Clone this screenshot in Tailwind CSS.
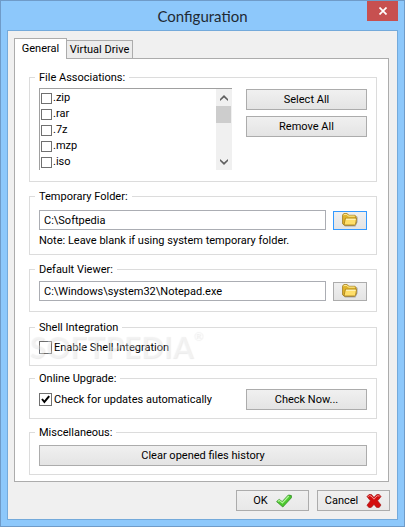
<!DOCTYPE html>
<html lang="en">
  <head>
    <meta charset="UTF-8" />
    <meta name="viewport" content="width=device-width, initial-scale=1.0" />
    <script src="https://cdn.jsdelivr.net/npm/@tailwindcss/browser@4"></script>
    <title>Configuration</title>
  </head>
  <body
    class="flex min-h-screen flex-col border border-[#6f9bc8] bg-[#8dc8fb] px-1.5 pb-1.5 font-['Roboto','DejaVu_Sans',sans-serif] text-[11px] leading-4 text-black"
  >
    <!-- title bar -->
    <header class="relative flex h-[29px] shrink-0 items-center justify-center">
      <h1 class="font-['Lato',sans-serif] text-[15px] text-[#1f2a33]">
        Configuration
      </h1>
      <button
        class="absolute top-0 right-0 grid h-5 w-[31px] place-items-center bg-[#c75050]"
        aria-label="Close"
      >
        <svg class="h-2 w-2" viewBox="0 0 8 8" stroke="#fff" stroke-width="1.7">
          <path d="M0.5 0.5 7.5 7.5M7.5 0.5 0.5 7.5" />
        </svg>
      </button>
    </header>

    <main
      class="flex grow flex-col border border-[#74aadb] bg-[#f0f0f0] px-1.5 pt-[7px] pb-2"
    >
      <!-- tabs -->
      <div class="flex items-end" role="tablist">
        <button
          class="relative -mb-px h-[21px] w-[53px] border border-b-0 border-[#acacac] bg-white pb-px"
          role="tab"
          aria-selected="true"
        >
          General
        </button>
        <button
          class="-ml-px h-[18px] w-[67px] border border-b-0 border-[#acacac] bg-[#ececec] whitespace-nowrap"
          role="tab"
          aria-selected="false"
        >
          Virtual Drive
        </button>
      </div>

      <form
        class="mr-0.5 flex grow flex-col border border-[#acacac] bg-white pt-3 pr-[11px] pb-1.5 pl-3.5"
      >
        <fieldset class="border border-[#dcdcdc] px-[9px] pt-1 pb-[11px]">
          <legend class="-ml-1 px-1 leading-[13px]">File Associations:</legend>
          <div class="flex items-start gap-3.5">
            <div
              class="flex h-[82px] grow border-t border-l border-[#a0a0a0] bg-white"
            >
              <ul class="grow overflow-hidden pt-px pl-px">
                <li class="flex h-4 items-center gap-px">
                  <input
                    id="zip"
                    type="checkbox"
                    class="h-[11px] w-[11px] appearance-none border border-[#707070] bg-white checked:bg-[#707070]"
                  />
                  <label for="zip">.zip</label>
                </li>
                <li class="flex h-4 items-center gap-px">
                  <input
                    id="rar"
                    type="checkbox"
                    class="h-[11px] w-[11px] appearance-none border border-[#707070] bg-white checked:bg-[#707070]"
                  />
                  <label for="rar">.rar</label>
                </li>
                <li class="flex h-4 items-center gap-px">
                  <input
                    id="7z"
                    type="checkbox"
                    class="h-[11px] w-[11px] appearance-none border border-[#707070] bg-white checked:bg-[#707070]"
                  />
                  <label for="7z">.7z</label>
                </li>
                <li class="flex h-4 items-center gap-px">
                  <input
                    id="mzp"
                    type="checkbox"
                    class="h-[11px] w-[11px] appearance-none border border-[#707070] bg-white checked:bg-[#707070]"
                  />
                  <label for="mzp">.mzp</label>
                </li>
                <li class="flex h-4 items-center gap-px">
                  <input
                    id="iso"
                    type="checkbox"
                    class="h-[11px] w-[11px] appearance-none border border-[#707070] bg-white checked:bg-[#707070]"
                  />
                  <label for="iso">.iso</label>
                </li>
              </ul>
              <!-- scrollbar -->
              <div class="flex w-4 flex-col bg-[#f0f0f0]">
                <button
                  type="button"
                  class="grid h-[17px] place-items-center"
                  aria-label="Scroll up"
                >
                  <svg class="h-1.5 w-2" viewBox="0 0 8 6" fill="#606060">
                    <path d="M4 0 8 4V6L4 2.6 0 6V4Z" />
                  </svg>
                </button>
                <div class="mr-px h-[17px] bg-[#cdcdcd]"></div>
                <button
                  type="button"
                  class="mt-auto grid h-[17px] place-items-center"
                  aria-label="Scroll down"
                >
                  <svg class="h-1.5 w-2" viewBox="0 0 8 6" fill="#606060">
                    <path d="M4 6 8 2V0L4 3.4 0 0V2Z" />
                  </svg>
                </button>
              </div>
            </div>
            <div class="flex w-[121px] flex-col gap-1.5 pt-px">
              <button
                type="button"
                class="h-[21px] border border-[#acacac] bg-linear-to-b from-[#f0f0f0] to-[#e4e4e4]"
              >
                Select All
              </button>
              <button
                type="button"
                class="h-[21px] border border-[#acacac] bg-linear-to-b from-[#f0f0f0] to-[#e4e4e4]"
              >
                Remove All
              </button>
            </div>
          </div>
        </fieldset>

        <fieldset class="mt-2 border border-[#dcdcdc] px-[9px] pt-[7px] pb-[5px]">
          <legend class="-ml-1 px-1 leading-[13px]">
            <label for="temp">Temporary Folder:</label>
          </legend>
          <div class="flex items-center gap-[7px]">
            <input
              id="temp"
              type="text"
              value="C:\Softpedia"
              class="h-5 min-w-0 grow border border-[#abadb3] bg-white px-1"
            />
            <button
              type="button"
              class="grid h-[19px] w-[34px] place-items-center border border-[#3399ff] bg-linear-to-b from-[#f0f0f0] to-[#e4e4e4]"
              aria-label="Browse temporary folder"
            >
              <svg class="h-3.5 w-4" viewBox="0 0 16 14">
                <path d="M2 12.5 3 13.6H13.5L15.6 9V4L14.5 3V9Z" fill="#777" opacity=".55" />
                <path d="M.6 10.8V2L1.8.6H5.2L6.8 2.3H13L14 3.3V10L12.5 12H2Z" fill="#e0b52e" stroke="#9a7414" stroke-width=".8" />
                <path d="M1.4 2.3 2.2 1.4H4.8L6.4 3.1H12.8" fill="none" stroke="#fff0a0" />
                <path d="M2 12 3.4 5.2H14.6L13.6 11.2 12.6 12Z" fill="#ffdf6a" stroke="#a57c18" stroke-width=".8" />
                <path d="M4 6.2H13.6" stroke="#fffad0" />
              </svg>
            </button>
          </div>
          <p class="mt-[3px]">
            Note: Leave blank if using system temporary folder.
          </p>
        </fieldset>

        <fieldset class="mt-2 border border-[#dcdcdc] px-[9px] pt-[5px] pb-2.5">
          <legend class="-ml-1 px-1 leading-[13px]">
            <label for="viewer">Default Viewer:</label>
          </legend>
          <div class="flex items-center gap-[7px]">
            <input
              id="viewer"
              type="text"
              value="C:\Windows\system32\Notepad.exe"
              class="h-5 min-w-0 grow border border-[#abadb3] bg-white px-1"
            />
            <button
              type="button"
              class="grid h-[19px] w-[34px] place-items-center border border-[#acacac] bg-linear-to-b from-[#f0f0f0] to-[#e4e4e4]"
              aria-label="Browse default viewer"
            >
              <svg class="h-3.5 w-4" viewBox="0 0 16 14">
                <path d="M2 12.5 3 13.6H13.5L15.6 9V4L14.5 3V9Z" fill="#777" opacity=".55" />
                <path d="M.6 10.8V2L1.8.6H5.2L6.8 2.3H13L14 3.3V10L12.5 12H2Z" fill="#e0b52e" stroke="#9a7414" stroke-width=".8" />
                <path d="M1.4 2.3 2.2 1.4H4.8L6.4 3.1H12.8" fill="none" stroke="#fff0a0" />
                <path d="M2 12 3.4 5.2H14.6L13.6 11.2 12.6 12Z" fill="#ffdf6a" stroke="#a57c18" stroke-width=".8" />
                <path d="M4 6.2H13.6" stroke="#fffad0" />
              </svg>
            </button>
          </div>
        </fieldset>

        <fieldset
          class="relative mt-[9px] border border-[#dcdcdc] px-[9px] pt-[7px] pb-[11px]"
        >
          <legend class="-ml-1 px-1 leading-[13px]">Shell Integration</legend>
          <div class="flex h-[13px] items-center gap-0.5">
            <input
              id="shell"
              type="checkbox"
              class="h-[13px] w-[13px] appearance-none border border-[#707070] bg-white checked:bg-[#707070]"
            />
            <label for="shell">Enable Shell Integration</label>
          </div>
          <!-- watermark -->
          <div
            class="pointer-events-none absolute -top-1.5 -left-px flex items-start font-['Lato',sans-serif] text-[30px] leading-9 font-bold text-white/35 text-shadow-[1px_1px_1px_rgb(0_0_0/0.08)]"
          >
            SOFTPEDIA<span class="text-[12px] leading-4">®</span>
          </div>
        </fieldset>

        <fieldset class="mt-1.5 border border-[#dcdcdc] px-[9px] pt-1 pb-2">
          <legend class="-ml-1 px-1 leading-[13px]">Online Upgrade:</legend>
          <div class="flex items-center gap-0.5">
            <span class="relative h-[13px] w-[13px]">
              <input
                id="updates"
                type="checkbox"
                checked
                class="peer block h-[13px] w-[13px] appearance-none border border-[#707070] bg-white"
              />
              <svg
                class="pointer-events-none absolute inset-0 hidden peer-checked:block"
                viewBox="0 0 13 13"
                fill="none"
                stroke="#000"
                stroke-width="2"
              >
                <path d="M3 6 5.4 9 10.2 3.2" />
              </svg>
            </span>
            <label for="updates">Check for updates automatically</label>
            <button
              type="button"
              class="ml-auto h-[21px] w-[121px] border border-[#acacac] bg-linear-to-b from-[#f0f0f0] to-[#e4e4e4]"
            >
              Check Now...
            </button>
          </div>
        </fieldset>

        <fieldset class="mt-[7px] border border-[#dcdcdc] px-[9px] pt-1.5 pb-2">
          <legend class="-ml-1 px-1 leading-[13px]">Miscellaneous:</legend>
          <button
            type="button"
            class="block h-[21px] w-full border border-[#acacac] bg-linear-to-b from-[#f0f0f0] to-[#e4e4e4]"
          >
            Clear opened files history
          </button>
        </fieldset>
      </form>

      <!-- dialog buttons -->
      <div class="mr-px mt-2 flex justify-end gap-2">
        <button
          class="flex h-[21px] w-[73px] items-center justify-center gap-2 border border-[#acacac] bg-linear-to-b from-[#f0f0f0] to-[#e8e8e8]"
        >
          OK
          <svg class="h-3.5 w-4" viewBox="0 0 16 14">
            <path d="M.6 7.6 3.2 5.4 6.2 7.6 12.4 1 15.4 1.6V3.8L6.8 13Z" fill="#4cc82e" stroke="#2c8a20" stroke-width=".8" stroke-linejoin="round" />
            <path d="M1.8 7.6 3.2 6.4 6.4 9 12.8 2" fill="none" stroke="#b2f59a" stroke-width="1.2" />
          </svg>
        </button>
        <button
          class="flex h-[21px] w-[73px] items-center justify-center gap-2 border border-[#acacac] bg-linear-to-b from-[#f0f0f0] to-[#e8e8e8]"
        >
          Cancel
          <svg class="h-3.5 w-4" viewBox="0 0 16 14">
            <path d="M1 2.6 3 .5H5.4L8 3.4 10.8.5H13.2L15 2.6 11.6 6.8 15 11 13.2 13.4H10.6L8 10.4 5.2 13.4H2.8L1 11.2 4.4 6.8Z" fill="#d40d0d" stroke="#a01818" stroke-width=".7" stroke-linejoin="round" />
            <path d="M2.2 2.6 3.6 1.6 5 2 8 5.2 11.2 1.8 13.6 2" fill="none" stroke="#f79090" />
          </svg>
        </button>
      </div>
    </main>
  </body>
</html>
